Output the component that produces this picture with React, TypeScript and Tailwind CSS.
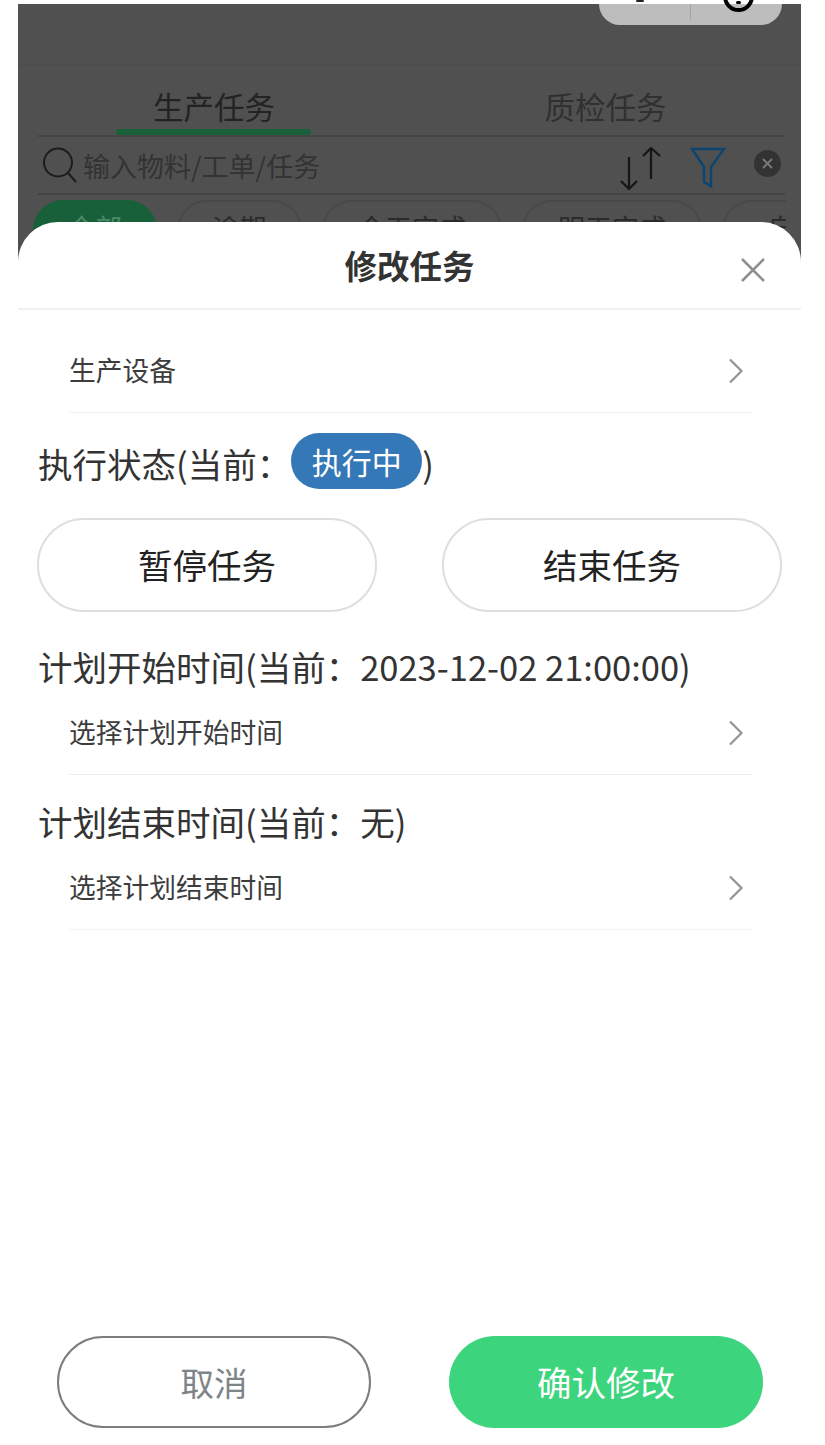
import React from "react";

const font = { fontFamily: '"Noto Sans CJK SC", "Noto Sans", sans-serif' };
const COLON = "\uFF1A";

function Chevron() {
  return (
    <svg width="16" height="26" viewBox="0 0 16 26" fill="none" className="shrink-0">
      <path d="M2 1.5 L13.5 13 L2 24.5" stroke="#949494" strokeWidth="2.2" />
    </svg>
  );
}

function Row({ label, h, line }: { label: string; h: string; line: string }) {
  return (
    <div className={`ml-[51px] mr-[49px] flex items-center justify-between border-b ${line} ${h} pr-[8px]`}>
      <span className="text-[26.75px] leading-none text-[#3d3d3d]">{label}</span>
      <Chevron />
    </div>
  );
}

function Chip({ w, label, active }: { w: string; label: string; active?: boolean }) {
  return (
    <div
      className={`${w} h-[60px] shrink-0 rounded-[30px] border-2 flex justify-center pt-[8px] text-[27px] leading-[36px] ${
        active ? "bg-[#17603a] border-[#17603a] text-[#4d8a68]" : "border-[#484848] text-[#2b2b2b]"
      }`}
    >
      {label}
    </div>
  );
}

export default function App() {
  return (
    <div style={font} className="relative w-[825px] h-[1445px] bg-white overflow-hidden pt-[4px] pl-[18px]">
      {/* dimmed page behind the sheet */}
      <div className="w-[783px] h-[260px] bg-[#505050] relative">
        <div className="ml-[581px] w-[183px] h-[21px] rounded-b-[30px] bg-[#bdbdbd] relative">
          <div className="absolute left-[91px] top-0 h-[16px] w-px bg-[#a3a3a3]" />
          <div className="absolute left-[37px] -top-[4px] w-[8px] h-[2px] rounded-full bg-[#222]" />
          <div className="absolute left-[124px] -top-[23px] w-[31px] h-[31px] rounded-full border-[4px] border-black flex items-start justify-center">
            <div className="w-[5px] h-[3px] mt-[16px] rounded-full bg-black" />
          </div>
        </div>
        <div className="mt-[39px] border-t border-[#4c4c4c] h-[70px] flex relative">
          <div className="w-[392px] flex justify-center pt-[19px] text-[30.5px] leading-[44px] text-[#232323]">生产任务</div>
          <div className="w-[391px] flex justify-center pt-[19px] text-[30.5px] leading-[44px] text-[#303030]">质检任务</div>
          <div className="absolute left-[98px] bottom-[-1px] w-[195px] h-[6px] rounded-full bg-[#17603a]" />
        </div>
        <div className="mx-[20px] mt-[1px] w-[747px] h-[60px] border-y-2 border-[#444] flex items-center pr-[4px]">
          <svg width="36" height="36" viewBox="0 0 36 36" fill="none" className="ml-[4px] shrink-0">
            <ellipse cx="16" cy="15.5" rx="14" ry="14" stroke="#1c1c1c" strokeWidth="2" />
            <path d="M26 26 L34 35" stroke="#1c1c1c" strokeWidth="2" />
          </svg>
          <span className="ml-[5px] text-[27px] leading-none text-[#333]">输入物料/工单/任务</span>
          <svg width="42" height="44" viewBox="0 0 42 44" fill="none" className="ml-auto shrink-0 mt-[8px]">
            <path d="M9 10 V42 M1 34 L9 42 L17 34" stroke="#161616" strokeWidth="2.2" />
            <path d="M31 32 V1 M23 9 L31 1 L40 9" stroke="#161616" strokeWidth="2.2" />
          </svg>
          <svg width="36" height="42" viewBox="0 0 36 42" fill="none" className="ml-[28px] shrink-0 mt-[6px]">
            <path d="M2 2 H34 L21 20 V39 L14 35 V20 Z" stroke="#0c4570" strokeWidth="2.5" />
          </svg>
          <div className="ml-[28px] w-[27px] h-[27px] rounded-full bg-[#333] flex items-center justify-center -mt-[4px]">
            <svg width="13" height="13" viewBox="0 0 13 13" fill="none">
              <path d="M2 2 L11 11 M11 2 L2 11" stroke="#7a7a7a" strokeWidth="1.8" />
            </svg>
          </div>
        </div>
        <div className="ml-[15px] mt-[5px] w-[753px] flex gap-[20px] overflow-hidden">
          <Chip w="w-[124px]" label="全部" active />
          <Chip w="w-[125px]" label="逾期" />
          <Chip w="w-[180px]" label="今天完成" />
          <Chip w="w-[180px]" label="明天完成" />
          <Chip w="w-[172px]" label="自定义" />
        </div>
      </div>

      {/* bottom sheet */}
      <div className="absolute left-[18px] top-[222px] w-[783px] h-[1223px] bg-white rounded-t-[40px] flex flex-col">
        <div className="h-[88px] border-b-2 border-[#f0f0f0] relative flex justify-center pt-[21px]">
          <span className="text-[32.5px] leading-[44px] font-bold text-[#333]">修改任务</span>
          <svg width="26" height="26" viewBox="0 0 26 26" fill="none" className="absolute right-[35px] top-[35px]">
            <path d="M2 2 L24 24 M24 2 L2 24" stroke="#8f8f8f" strokeWidth="2.5" />
          </svg>
        </div>
        <Row label="生产设备" h="h-[103px] pt-[19px]" line="border-[#f0f0f0]" />
        <div className="mt-[20px] ml-[20px] flex items-center h-[56px] text-[34.5px] text-[#333]">
          <span className="leading-[46px] mt-[4px]">执行状态(当前{COLON}</span>
          <span className="w-[131px] h-[56px] rounded-[28px] bg-[#3578b8] text-white text-[30px] leading-[56px] flex justify-center">执行中</span>
          <span className="leading-[46px] mt-[4px]">)</span>
        </div>
        <div className="mt-[29px] mx-[19px] flex justify-between">
          <div className="w-[340px] h-[94px] rounded-[47px] border-2 border-[#dedede] flex items-center justify-center text-[34.5px] text-[#222]">暂停任务</div>
          <div className="w-[340px] h-[94px] rounded-[47px] border-2 border-[#dedede] flex items-center justify-center text-[34.5px] text-[#222]">结束任务</div>
        </div>
        <div className="mt-[31px] ml-[20px] text-[34.5px] leading-[46px] text-[#333]">计划开始时间(当前{COLON}2023-12-02 21:00:00)</div>
        <Row label="选择计划开始时间" h="h-[86px] pt-[2px]" line="border-[#ececec]" />
        <div className="mt-[23px] ml-[20px] text-[34.5px] leading-[46px] text-[#333]">计划结束时间(当前{COLON}无)</div>
        <Row label="选择计划结束时间" h="h-[86px] pt-[2px]" line="border-[#f2f2f2]" />
        <div className="mt-auto mb-[17px] ml-[39px] mr-[38px] flex justify-between">
          <div className="w-[314px] h-[92px] rounded-[46px] border-2 border-[#7d7d7d] flex items-center justify-center text-[33.5px] text-[#7e8588]">取消</div>
          <div className="w-[314px] h-[92px] rounded-[46px] bg-[#3dd47e] flex items-center justify-center text-[34.5px] text-white">确认修改</div>
        </div>
      </div>
    </div>
  );
}
